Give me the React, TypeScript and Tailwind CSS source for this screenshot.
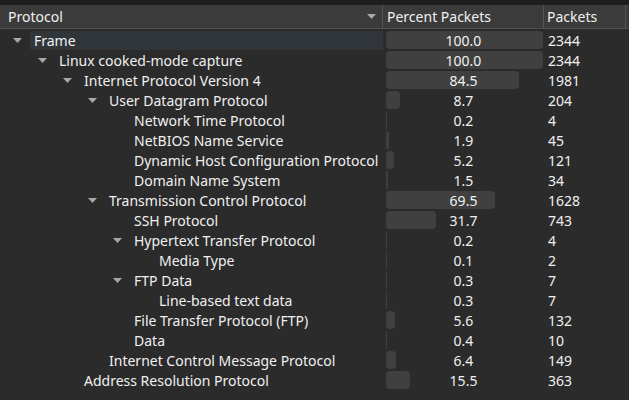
import React from "react";

type Row = { name: string; level: number; expand: boolean; pct: string; pkts: string };

const rows: Row[] = [
  { name: "Frame", level: 0, expand: true, pct: "100.0", pkts: "2344" },
  { name: "Linux cooked-mode capture", level: 1, expand: true, pct: "100.0", pkts: "2344" },
  { name: "Internet Protocol Version 4", level: 2, expand: true, pct: "84.5", pkts: "1981" },
  { name: "User Datagram Protocol", level: 3, expand: true, pct: "8.7", pkts: "204" },
  { name: "Network Time Protocol", level: 4, expand: false, pct: "0.2", pkts: "4" },
  { name: "NetBIOS Name Service", level: 4, expand: false, pct: "1.9", pkts: "45" },
  { name: "Dynamic Host Configuration Protocol", level: 4, expand: false, pct: "5.2", pkts: "121" },
  { name: "Domain Name System", level: 4, expand: false, pct: "1.5", pkts: "34" },
  { name: "Transmission Control Protocol", level: 3, expand: true, pct: "69.5", pkts: "1628" },
  { name: "SSH Protocol", level: 4, expand: false, pct: "31.7", pkts: "743" },
  { name: "Hypertext Transfer Protocol", level: 4, expand: true, pct: "0.2", pkts: "4" },
  { name: "Media Type", level: 5, expand: false, pct: "0.1", pkts: "2" },
  { name: "FTP Data", level: 4, expand: true, pct: "0.3", pkts: "7" },
  { name: "Line-based text data", level: 5, expand: false, pct: "0.3", pkts: "7" },
  { name: "File Transfer Protocol (FTP)", level: 4, expand: false, pct: "5.6", pkts: "132" },
  { name: "Data", level: 4, expand: false, pct: "0.4", pkts: "10" },
  { name: "Internet Control Message Protocol", level: 3, expand: false, pct: "6.4", pkts: "149" },
  { name: "Address Resolution Protocol", level: 2, expand: false, pct: "15.5", pkts: "363" },
];

const Tri = ({ cls }: { cls: string }) => (
  <svg width="9" height="5" viewBox="0 0 9 5" className={cls}>
    <polygon points="0,0 9,0 4.5,5" fill="#a8a8a8" />
  </svg>
);

export default function App() {
  return (
    <div
      className="w-[629px] h-[400px] bg-[#2b2b2b] text-[#f0f0f0] overflow-hidden text-[14px] leading-[20px]"
      style={{ fontFamily: '"Noto Sans", "Open Sans", sans-serif' }}
    >
      <div className="h-[5px] bg-[#1e1e1e]" />
      <div className="flex h-[24px] bg-[#3b3b3b] border-b border-[#505050]">
        <div className="w-[383px] flex items-center pl-[8px] pr-[6px] border-r border-[#555555]">
          <span className="flex-1 pt-[1px]">Protocol</span>
          <Tri cls="" />
        </div>
        <div className="w-[161px] flex items-center pl-[4px] pt-[1px] border-r border-[#555555]">Percent Packets</div>
        <div className="w-[82px] flex items-center pl-[3px] pt-[1px] border-r border-[#555555]">Packets</div>
      </div>
      <div className="pt-[1px]">
        {rows.map((r, i) => (
          <div key={i} className="flex h-[20px]">
            <div className="w-[383px] flex items-center" style={{ paddingLeft: 13 + r.level * 25 }}>
              <div className="w-[21px] flex items-center justify-start">
                {r.expand && <Tri cls="" />}
              </div>
              <span
                className={
                  i === 0
                    ? "flex-1 h-[19px] bg-[#31363b] rounded-l-[2px] pl-[4px] -ml-[4px] flex items-center whitespace-nowrap pt-[1px]"
                    : "whitespace-nowrap pt-[1px]"
                }
              >
                {r.name}
              </span>
            </div>
            <div className="w-[161px] relative flex items-center justify-center">
              <div
                className="absolute left-[3px] top-[1px] h-[18px] bg-[#404040] rounded-[4px]"
                style={{ width: Math.max(1, (parseFloat(r.pct) / 100) * 157) }}
              />
              <span className="relative pt-[1px]">{r.pct}</span>
            </div>
            <div className="pl-[4px] flex items-center pt-[1px]">{r.pkts}</div>
          </div>
        ))}
      </div>
    </div>
  );
}
